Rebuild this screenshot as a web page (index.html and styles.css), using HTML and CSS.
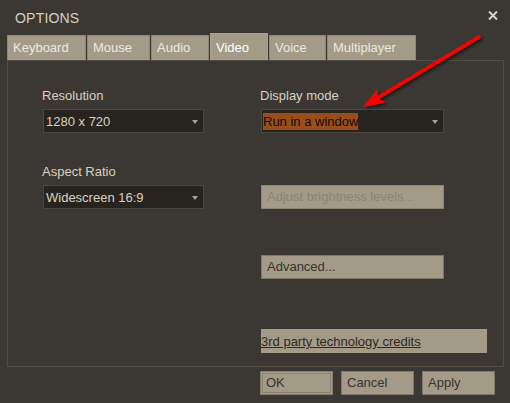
FILE: index.html
```html
<!DOCTYPE html>
<html>
<head>
<meta charset="utf-8">
<link rel="stylesheet" href="styles.css">
</head>
<body>
<div class="window">
  <div class="titlebar">
    <span class="title">OPTIONS</span>
    <svg class="close" width="10" height="9" viewBox="0 0 10 9"><path d="M1 0.5 L9 8.5 M9 0.5 L1 8.5" stroke="#d8d2c2" stroke-width="2"/></svg>
  </div>
  <div class="tabs">
    <div class="tab w-kb">Keyboard</div>
    <div class="tab w-mouse">Mouse</div>
    <div class="tab w-audio">Audio</div>
    <div class="tab w-video active">Video</div>
    <div class="tab w-voice">Voice</div>
    <div class="tab w-multi">Multiplayer</div>
  </div>
  <div class="panel">
    <div class="col col-left">
      <div class="label">Resolution</div>
      <div class="combo"><span class="value">1280 x 720</span><span class="caret"></span></div>
      <div class="label label-second">Aspect Ratio</div>
      <div class="combo"><span class="value">Widescreen 16:9</span><span class="caret"></span></div>
    </div>
    <div class="col col-right">
      <div class="label">Display mode</div>
      <div class="combo combo-wide"><span class="value selected">Run in a window</span><span class="caret"></span></div>
      <div class="btn btn-wide disabled bright">Adjust brightness levels...</div>
      <div class="btn btn-wide advanced">Advanced...</div>
      <div class="btn link">3rd party technology credits</div>
    </div>
  </div>
  <div class="actions">
    <div class="btn action focused">OK</div>
    <div class="btn action">Cancel</div>
    <div class="btn action">Apply</div>
  </div>
  <svg class="arrow" width="510" height="403" viewBox="0 0 510 403">
    <defs>
      <filter id="sh" x="-20%" y="-20%" width="140%" height="140%">
        <feDropShadow dx="2" dy="2" stdDeviation="1.5" flood-color="#000" flood-opacity="0.55"/>
      </filter>
    </defs>
    <g filter="url(#sh)">
      <line x1="479" y1="37" x2="379" y2="97" stroke="#ff0000" stroke-width="3.5" stroke-linecap="round"/>
      <polygon points="363,107 377.7,88.8 377.6,98.2 385.9,102.4" fill="#ff0000"/>
    </g>
  </svg>
</div>
</body>
</html>
```
FILE: styles.css
```css
* { box-sizing: border-box; }
html, body { margin: 0; padding: 0; }
body {
  background: #3b3733;
  font-family: "Liberation Sans", Arial, sans-serif;
  font-size: 13px;
}
.window {
  position: relative;
  width: 510px;
  height: 403px;
  background: #3b3733;
  overflow: hidden;
}
.titlebar {
  height: 33px;
  padding: 10px 12px 0 15px;
  display: flex;
  justify-content: space-between;
  align-items: flex-start;
}
.title {
  font-size: 14px;
  line-height: 16px;
  color: #d6d0c3;
  letter-spacing: 0.2px;
}
.close { margin-top: 1px; }
.tabs {
  height: 27px;
  margin-left: 7px;
  display: flex;
  align-items: flex-end;
  gap: 1px;
}
.tab {
  height: 25px;
  line-height: 23px;
  padding-left: 5px;
  background: #a39b88;
  border: 1px solid #8f8776;
  border-bottom: none;
  color: #ece8e0;
  white-space: nowrap;
}
.tab.active {
  height: 27px;
  line-height: 27px;
  color: #ffffff;
  border-color: #aaa391;
}
.w-kb { width: 79px; }
.w-mouse { width: 63px; }
.w-audio { width: 58px; }
.w-video { width: 58px; }
.w-voice { width: 57px; }
.w-multi { width: 89px; padding-left: 5px; }
.panel {
  margin-left: 7px;
  width: 497px;
  height: 307px;
  border: 1px solid #504c44;
  padding: 27px 0 0 35px;
  display: flex;
}
.col { display: flex; flex-direction: column; }
.col-left { width: 161px; }
.col-right { width: 226px; margin-left: 57px; }
.label {
  line-height: 16px;
  height: 16px;
  color: #d8d1c0;
  margin-left: -1px;
  margin-bottom: 5px;
}
.label-second { margin-top: 31px; }
.combo {
  width: 161px;
  height: 24px;
  background: #27241f;
  border: 1px solid #4b473f;
  display: flex;
  align-items: center;
  justify-content: space-between;
  padding: 0 5px 0 2px;
}
.combo-wide { width: 183px; padding-left: 1px; }
.value {
  color: #d8d2c2;
  line-height: 17px;
  white-space: nowrap;
}
.value.selected {
  background: #9a4e1b;
  color: #100a05;
}
.caret {
  width: 0;
  height: 0;
  border-left: 3.5px solid transparent;
  border-right: 3.5px solid transparent;
  border-top: 4px solid #a8a08e;
  margin-top: 1px;
}
.btn {
  height: 24px;
  background: #a39b88;
  border: 1px solid #7f7868;
  color: #38332c;
  line-height: 22px;
  padding-left: 5px;
  white-space: nowrap;
}
.btn-wide { width: 183px; }
.bright { margin-top: 52px; }
.advanced { margin-top: 46px; }
.disabled { color: #8b8373; border-color: #8d8574; }
.link {
  margin-top: 50px;
  width: 226px;
  border: none;
  padding: 1px 0 0 0;
  line-height: 24px;
  text-decoration: underline;
  color: #2e2a24;
}
.actions {
  margin-top: 4px;
  padding-right: 15px;
  display: flex;
  justify-content: flex-end;
  gap: 8px;
}
.action { width: 73px; }
.focused {
  border-color: #857d6c;
  box-shadow: inset 0 0 0 1px #a39b88, inset 0 0 0 2px #8a826f;
}
.arrow {
  position: absolute;
  left: 0;
  top: 0;
  pointer-events: none;
}
```
